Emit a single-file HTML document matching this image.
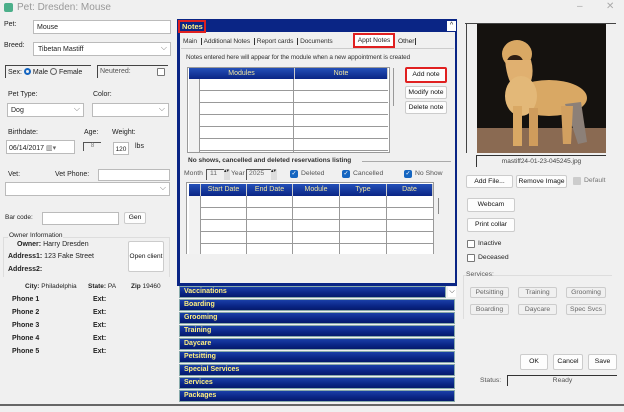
<!DOCTYPE html>
<html><head><meta charset="utf-8"><style>
*{box-sizing:border-box;margin:0;padding:0}
body{width:624px;height:412px;background:#f0f0f0;font-family:"Liberation Sans",sans-serif;font-size:7px;color:#222;position:relative;overflow:hidden}
.a{position:absolute;white-space:nowrap}
.in{position:absolute;background:#fff;border:1px solid #bbb;white-space:nowrap}
.btn{position:absolute;background:#fdfdfd;border:1px solid #ccc;border-radius:2px;text-align:center;font-size:6.8px;color:#111;white-space:nowrap;overflow:hidden}
.bar{position:absolute;left:179px;width:276px;height:12px;background:linear-gradient(#1a3fa8,#0a2585 60%,#061a6c);border:1px solid #8aa;color:#ffef80;font-weight:bold;font-size:7px;padding-left:4px;line-height:10px}
.sel:after{content:"⌵";position:absolute;right:3px;top:0;color:#777;font-size:8px}
.th{position:absolute;background:linear-gradient(#2450b8,#0a2585);color:#f0e6a0;font-size:7px;text-align:center;line-height:11px;border-right:1px solid #ccc}
.cb{position:absolute;width:8px;height:8px;border:1px solid #777;border-radius:1px;background:#fff}
.cbb{position:absolute;width:8px;height:8px;border-radius:2px;background:#1565c0;color:#fff;font-size:6px;text-align:center;line-height:8px}
.b{font-weight:bold}
</style></head><body>
<div class="a" style="left:4px;top:3px;width:9px;height:9px;background:#4caf8a;border-radius:2px"></div>
<div class="a" style="left:17px;top:2px;font-size:10px;color:#999">Pet: Dresden: Mouse</div>
<div class="a" style="left:577px;top:1px;font-size:10px;color:#aaa">–</div>
<div class="a" style="left:606px;top:1px;font-size:10px;color:#aaa">✕</div>

<div class="a" style="left:4px;top:21px">Pet:</div>
<div class="in" style="left:33px;top:20px;width:138px;height:14px;padding:3px 0 0 3px">Mouse</div>
<div class="a" style="left:4px;top:42px">Breed:</div>
<div class="in sel" style="left:33px;top:42px;width:138px;height:14px;padding:3px 0 0 4px">Tibetan Mastiff</div>
<div class="a" style="left:5px;top:65px;width:86px;height:13px;border-top:1px solid #444;border-left:1px solid #444;padding:2px 0 0 2px">Sex: <span style="display:inline-block;width:7px;height:7px;border:2px solid #1565c0;border-radius:50%;vertical-align:-1px"></span> Male <span style="display:inline-block;width:7px;height:7px;border:1px solid #666;border-radius:50%;vertical-align:-1px"></span> Female</div>
<div class="a" style="left:97px;top:65px;width:71px;height:13px;border-top:1px solid #444;border-left:1px solid #444;padding:2px 0 0 2px;color:#555">Neutered:</div>
<div class="cb" style="left:157px;top:68px"></div>
<div class="a" style="left:8px;top:91px">Pet Type:</div>
<div class="in sel" style="left:7px;top:103px;width:77px;height:14px;padding:3px 0 0 3px">Dog</div>
<div class="a" style="left:93px;top:91px">Color:</div>
<div class="in sel" style="left:92px;top:103px;width:77px;height:14px"></div>
<div class="a" style="left:8px;top:129px">Birthdate:</div>
<div class="in" style="left:6px;top:140px;width:69px;height:14px;padding:3px 0 0 2px">06/14/2017 <span style="color:#666">▥▾</span></div>
<div class="a" style="left:84px;top:129px">Age:</div>
<div class="a" style="left:83px;top:142px;width:18px;height:9px;border-top:1px solid #555;border-left:1px solid #555;font-size:6px;color:#777;text-align:center">8</div>
<div class="a" style="left:112px;top:129px">Weight:</div>
<div class="in" style="left:113px;top:142px;width:16px;height:13px;font-size:6.5px;text-align:center;padding-top:3px">120</div>
<div class="a" style="left:135px;top:143px">lbs</div>
<div class="a" style="left:8px;top:171px">Vet:</div>
<div class="a" style="left:55px;top:171px">Vet Phone:</div>
<div class="in" style="left:98px;top:169px;width:72px;height:12px"></div>
<div class="in sel" style="left:5px;top:182px;width:165px;height:14px"></div>
<div class="a" style="left:5px;top:214px;font-size:6.5px">Bar code:</div>
<div class="in" style="left:42px;top:212px;width:77px;height:13px"></div>
<div class="btn" style="left:124px;top:212px;width:22px;height:12px;line-height:10px">Gen</div>
<div class="a" style="left:3px;top:237px;width:167px;height:40px;border:1px solid #ddd;border-bottom:none"></div>
<div class="a" style="left:8px;top:232px;font-size:6.5px;background:#f0f0f0;padding:0 1px">Owner Information</div>
<div class="a" style="left:17px;top:241px"><span class="b">Owner:</span> Harry Dresden</div>
<div class="a" style="left:8px;top:253px"><span class="b">Address1:</span> 123 Fake Street</div>
<div class="a b" style="left:8px;top:266px">Address2:</div>
<div class="btn" style="left:128px;top:241px;width:36px;height:31px;line-height:29px;background:#fff;font-size:6.5px">Open client</div>
<div class="a" style="left:25px;top:283px;font-size:6.5px"><span class="b">City:</span> Philadelphia</div>
<div class="a" style="left:88px;top:283px;font-size:6.5px"><span class="b">State:</span> PA</div>
<div class="a" style="left:131px;top:283px;font-size:6.5px"><span class="b">Zip</span> 19460</div>
<div class="a b" style="left:12px;top:296px">Phone 1</div><div class="a b" style="left:93px;top:296px">Ext:</div>
<div class="a b" style="left:12px;top:309px">Phone 2</div><div class="a b" style="left:93px;top:309px">Ext:</div>
<div class="a b" style="left:12px;top:322px">Phone 3</div><div class="a b" style="left:93px;top:322px">Ext:</div>
<div class="a b" style="left:12px;top:335px">Phone 4</div><div class="a b" style="left:93px;top:335px">Ext:</div>
<div class="a b" style="left:12px;top:348px">Phone 5</div><div class="a b" style="left:93px;top:348px">Ext:</div>

<div class="a" style="left:177px;top:19px;width:280px;height:267px;background:#0a2585"></div>
<div class="a" style="left:180px;top:32px;width:275px;height:251px;background:#f0f0f0"></div>
<div class="a" style="left:178px;top:20px;width:28px;height:13px;border:2px solid #e02020;color:#ffef80;font-weight:bold;font-size:7.5px;padding:0 0 0 2px;line-height:9px">Notes</div>
<div class="a" style="left:447px;top:21px;width:9px;height:10px;background:#fff;font-size:7px;text-align:center;line-height:10px">^</div>
<div class="a" style="left:183px;top:38px;font-size:6.6px;color:#333;letter-spacing:-0.1px">Main <span style="border-left:1px solid #333;margin:0 2px"></span> Additional Notes <span style="border-left:1px solid #333;margin:0 2px"></span> Report cards <span style="border-left:1px solid #333;margin:0 2px"></span> Documents</div>
<div class="a" style="left:353px;top:33px;width:42px;height:15px;border:2px solid #e02020;background:#fff;font-size:6.6px;text-align:center;line-height:11px">Appt Notes</div>
<div class="a" style="left:398px;top:38px;font-size:6.6px">Other <span style="border-left:1px solid #333"></span></div>
<div class="a" style="left:181px;top:48px;width:273px;height:1px;background:#ccc"></div>
<div class="a" style="left:186px;top:54px;font-size:6.4px;color:#333;letter-spacing:-0.1px">Notes entered here will appear for the module when a new appointment is created</div>
<div class="a" style="left:187px;top:67px;width:203px;height:86px;background:#fff;border:1px solid #999"></div>
<div class="th" style="left:189px;top:68px;width:106px;height:11px">Modules</div>
<div class="th" style="left:295px;top:68px;width:93px;height:11px">Note</div>
<div class="a" style="left:189px;top:79px;width:199px;height:73px;background:repeating-linear-gradient(#fff 0 11px,#999 11px 12px)"></div>
<div class="a" style="left:189px;top:79px;width:11px;height:73px;background:#f2f2f2;border-right:1px solid #999"></div>
<div class="a" style="left:293px;top:79px;width:1px;height:73px;background:#999"></div>
<div class="a" style="left:393px;top:68px;width:1px;height:38px;background:#999"></div>
<div class="btn" style="left:405px;top:67px;width:42px;height:16px;border:2px solid #e02020;line-height:12px">Add note</div>
<div class="btn" style="left:405px;top:86px;width:42px;height:13px;line-height:11px">Modify note</div>
<div class="btn" style="left:405px;top:101px;width:42px;height:13px;line-height:11px">Delete note</div>
<div class="a b" style="left:188px;top:157px;font-size:6.5px;color:#333">No shows, cancelled and deleted reservations listing</div>
<div class="a" style="left:362px;top:161px;width:89px;height:1px;background:#aaa"></div>
<div class="a" style="left:184px;top:170px;font-size:6.8px;color:#555">Month</div>
<div class="a" style="left:206px;top:169px;width:18px;height:11px;border-top:1px solid #555;border-left:1px solid #555;font-size:6.8px;color:#666;padding-left:3px">11</div>
<div class="a" style="left:224px;top:169px;width:6px;height:11px;background:#ddd;font-size:5px;line-height:5px">▴▾</div>
<div class="a" style="left:231px;top:170px;font-size:6.8px;color:#555">Year</div>
<div class="a" style="left:246px;top:169px;width:25px;height:11px;border-top:1px solid #555;border-left:1px solid #555;font-size:6.8px;color:#666;padding-left:2px">2025</div>
<div class="a" style="left:271px;top:169px;width:6px;height:11px;background:#ddd;font-size:5px;line-height:5px">▴▾</div>
<div class="cbb" style="left:290px;top:170px">✓</div><div class="a" style="left:301px;top:170px;font-size:6.8px;color:#555">Deleted</div>
<div class="cbb" style="left:342px;top:170px">✓</div><div class="a" style="left:353px;top:170px;font-size:6.8px;color:#555">Cancelled</div>
<div class="cbb" style="left:404px;top:170px">✓</div><div class="a" style="left:415px;top:170px;font-size:6.8px;color:#555">No Show</div>
<div class="a" style="left:186px;top:182px;width:248px;height:72px;background:#fff;border:1px solid #999;border-bottom:none"></div>
<div class="th" style="left:189px;top:184px;width:12px;height:12px"></div>
<div class="th" style="left:201px;top:184px;width:46px;height:12px">Start Date</div>
<div class="th" style="left:247px;top:184px;width:46px;height:12px">End Date</div>
<div class="th" style="left:293px;top:184px;width:47px;height:12px">Module</div>
<div class="th" style="left:340px;top:184px;width:47px;height:12px">Type</div>
<div class="th" style="left:387px;top:184px;width:46px;height:12px">Date</div>
<div class="a" style="left:189px;top:196px;width:244px;height:58px;background:repeating-linear-gradient(#fff 0 11px,#999 11px 12px)"></div>
<div class="a" style="left:189px;top:196px;width:12px;height:58px;background:#f2f2f2;border-right:1px solid #999"></div>
<div class="a" style="left:246px;top:196px;width:1px;height:58px;background:#999"></div>
<div class="a" style="left:292px;top:196px;width:1px;height:58px;background:#999"></div>
<div class="a" style="left:339px;top:196px;width:1px;height:58px;background:#999"></div>
<div class="a" style="left:386px;top:196px;width:1px;height:58px;background:#999"></div>
<div class="a" style="left:438px;top:198px;width:1px;height:16px;background:#888"></div>
<div class="a" style="left:180px;top:283px;width:275px;height:2px;background:#0a2585"></div>
<div class="bar" style="top:286px;width:267px">Vaccinations</div>
<div class="a" style="left:448px;top:287px;width:8px;height:10px;background:#fff;font-size:7px;text-align:center;line-height:10px">⌵</div>
<div class="bar" style="top:299px">Boarding</div>
<div class="bar" style="top:312px">Grooming</div>
<div class="bar" style="top:325px">Training</div>
<div class="bar" style="top:338px">Daycare</div>
<div class="bar" style="top:351px">Petsitting</div>
<div class="bar" style="top:364px">Special Services</div>
<div class="bar" style="top:377px">Services</div>
<div class="bar" style="top:390px">Packages</div>
<div class="a" style="left:0;top:404px;width:624px;height:2px;background:#666"></div>
<div class="a" style="left:0;top:406px;width:624px;height:6px;background:#f0f0f0"></div>

<div class="a" style="left:465px;top:23px;width:151px;height:1px;background:#444"></div>
<div class="a" style="left:466px;top:23px;width:1px;height:130px;background:#444"></div>
<svg class="a" style="left:477px;top:24px" width="129" height="129" viewBox="0 0 129 129">
<rect width="129" height="129" fill="#15120f"/>
<rect x="0" y="104" width="129" height="25" fill="#8a6a52"/>
<ellipse cx="40" cy="30" rx="15" ry="14" fill="#d9a864"/>
<ellipse cx="38" cy="38" rx="8" ry="7" fill="#2e1e14"/>
<path d="M28 36 Q30 56 36 62 L52 62 Q58 50 54 36 Z" fill="#e0b070"/>
<ellipse cx="72" cy="74" rx="38" ry="18" fill="#d9a864"/>
<ellipse cx="44" cy="72" rx="16" ry="20" fill="#e3b878"/>
<rect x="36" y="82" width="9" height="40" fill="#d9a864"/>
<rect x="52" y="84" width="9" height="38" fill="#cf9c5c"/>
<path d="M88 80 L104 78 L110 118 L101 120 Z" fill="#8c8078"/>
<path d="M84 82 L96 82 L94 120 L86 120 Z" fill="#d2a060"/>
</svg>
<div class="a" style="left:476px;top:155px;width:130px;height:12px;border-top:1px solid #333;border-left:1px solid #333;font-size:6.5px;color:#444;text-align:center;line-height:11px">mastiff24-01-23-045245.jpg</div>
<div class="btn" style="left:466px;top:175px;width:47px;height:13px;line-height:11px">Add File...</div>
<div class="btn" style="left:516px;top:175px;width:51px;height:13px;line-height:11px">Remove Image</div>
<div class="a" style="left:573px;top:177px;width:8px;height:8px;background:#ccc;border-radius:1px"></div>
<div class="a" style="left:584px;top:177px;font-size:6.8px;color:#777">Default</div>
<div class="btn" style="left:467px;top:198px;width:48px;height:14px;line-height:12px">Webcam</div>
<div class="btn" style="left:467px;top:218px;width:48px;height:14px;line-height:12px">Print collar</div>
<div class="cb" style="left:467px;top:240px"></div><div class="a" style="left:478px;top:240px;font-size:6.8px">Inactive</div>
<div class="cb" style="left:467px;top:254px"></div><div class="a" style="left:478px;top:254px;font-size:6.8px">Deceased</div>
<div class="a" style="left:463px;top:275px;width:149px;height:44px;border:1px solid #ddd;border-bottom:none;border-right:none"></div>
<div class="a" style="left:466px;top:271px;font-size:6.8px;color:#555;background:#f0f0f0">Services:</div>
<div class="btn" style="left:470px;top:287px;width:39px;height:11px;line-height:9px;background:#f0f0f0;color:#666">Petsitting</div>
<div class="btn" style="left:518px;top:287px;width:39px;height:11px;line-height:9px;background:#f0f0f0;color:#666">Training</div>
<div class="btn" style="left:566px;top:287px;width:40px;height:11px;line-height:9px;background:#f0f0f0;color:#666">Grooming</div>
<div class="btn" style="left:470px;top:304px;width:39px;height:11px;line-height:9px;background:#f0f0f0;color:#666">Boarding</div>
<div class="btn" style="left:518px;top:304px;width:39px;height:11px;line-height:9px;background:#f0f0f0;color:#666">Daycare</div>
<div class="btn" style="left:566px;top:304px;width:40px;height:11px;line-height:9px;background:#f0f0f0;color:#666">Spec Svcs</div>
<div class="btn" style="left:520px;top:354px;width:28px;height:16px;line-height:14px">OK</div>
<div class="btn" style="left:553px;top:354px;width:30px;height:16px;line-height:14px">Cancel</div>
<div class="btn" style="left:588px;top:354px;width:29px;height:16px;line-height:14px">Save</div>
<div class="a" style="left:480px;top:377px;font-size:6.8px;color:#555">Status:</div>
<div class="a" style="left:507px;top:375px;width:110px;height:11px;border-top:1px solid #333;border-left:1px solid #333;font-size:6.8px;color:#555;text-align:center;line-height:10px">Ready</div>
</body></html>
